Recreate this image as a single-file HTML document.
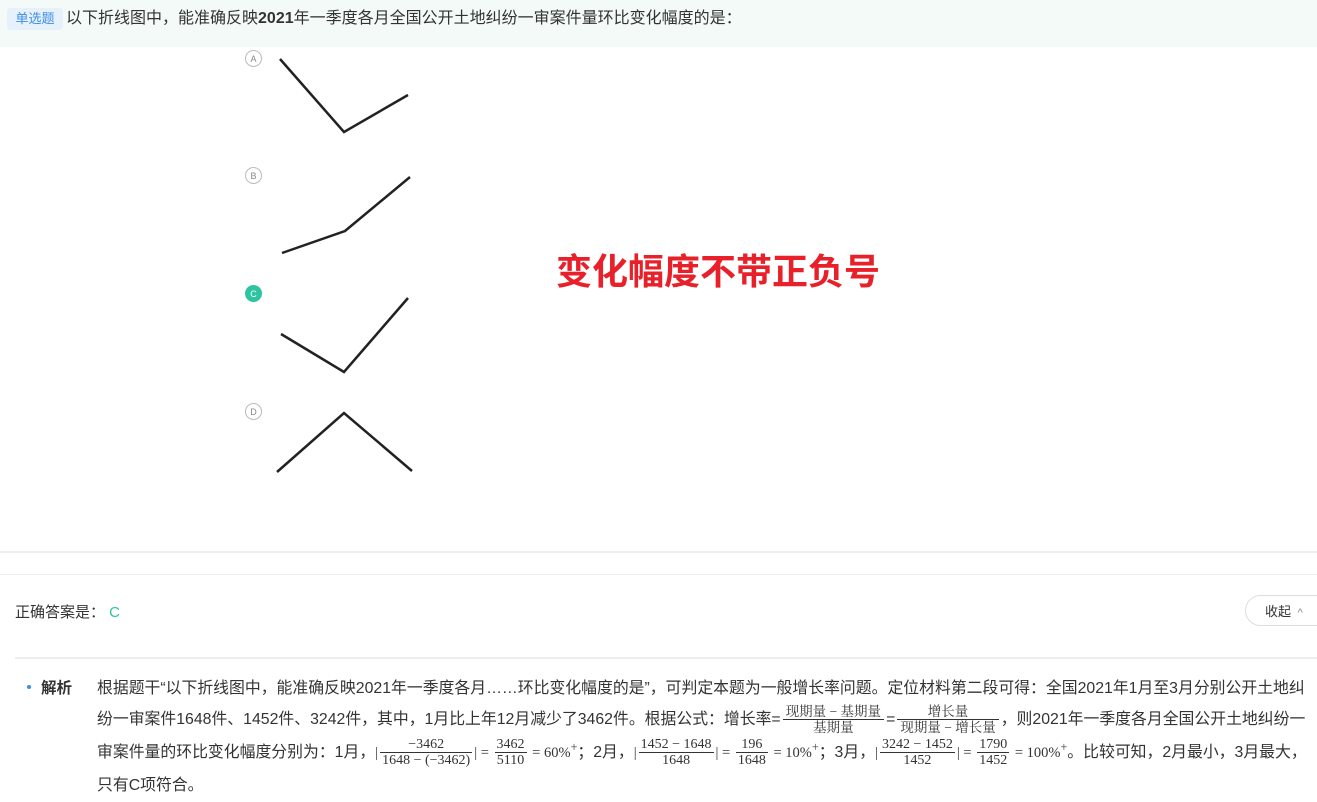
<!DOCTYPE html>
<html><head><meta charset="utf-8"><style>
body{margin:0;width:1317px;height:801px;overflow:hidden;background:#fff;font-family:"Liberation Sans","Noto Sans CJK SC",sans-serif;color:#333;position:relative}
.hdr{position:absolute;left:0;top:0;width:1317px;height:47px;background:#f3faf8}
.badge{position:absolute;left:7px;top:8px;width:56px;height:22px;background:#e6f1fc;border-radius:4px;color:#3d8ee8;font-size:13px;line-height:22px;text-align:center}
.q{position:absolute;left:66px;top:9px;font-size:16px;line-height:20px;color:#333;white-space:nowrap}
.opt{position:absolute;left:245px;width:17px;height:17px;border:1px solid #bbb;border-radius:50%;font-size:9px;line-height:17px;text-align:center;color:#888;box-sizing:border-box}
.red{position:absolute;left:556px;top:243px;font-size:36px;font-weight:bold;color:#e8202a}
.hl{position:absolute;left:0;width:1317px;height:2px;background:#eee}
.ans{position:absolute;left:15px;top:601px;font-size:15px}
.btn{position:absolute;left:1245px;top:595px;width:90px;height:31px;border:1px solid #ddd;border-radius:16px;font-size:13px;line-height:31px;box-sizing:border-box;padding-left:19px;color:#333}
.dot{position:absolute;left:27px;top:685px;width:4px;height:4px;border-radius:50%;background:#3d8ee8}
.jx{position:absolute;left:41px;top:676px;font-size:15.5px;font-weight:bold;color:#333}
.txt{position:absolute;left:97px;top:673px;width:1300px;font-size:15.85px;line-height:32px;color:#333;white-space:nowrap}
.l{position:absolute;left:0}
.fr{display:inline-block;vertical-align:middle;text-align:center;font-family:"Liberation Serif","Noto Serif CJK SC",serif;font-size:14px;line-height:13px;margin:0 2px}
.fr span{display:block;padding:1px 2px}
.fr span:first-child{border-bottom:1px solid #333}
.m{font-family:"Liberation Serif",serif;font-size:14.5px}
</style></head><body>
<div class="hdr"></div>
<div class="badge">单选题</div>
<div class="q">以下折线图中，能准确反映<b>2021</b>年一季度各月全国公开土地纠纷一审案件量环比变化幅度的是：</div>
<div class="opt" style="top:50px">A</div>
<div class="opt" style="top:167px">B</div>
<div class="opt" style="top:285px;background:#2ec4a0;border-color:#2ec4a0;color:#fff">C</div>
<div class="opt" style="top:403px">D</div>
<svg style="position:absolute;left:0;top:0" width="1317" height="540"><g fill="none" stroke="#222" stroke-width="2.5">
<polyline points="280,59 344,132 408,95"/>
<polyline points="282,253 345,231 410,177"/>
<polyline points="281,334 344,372 408,298"/>
<polyline points="277,472 344,413 412,471"/></g></svg>
<div class="red">变化幅度不带正负号</div>
<div class="hl" style="top:551px"></div>
<div class="hl" style="top:574px;height:1px"></div>
<div class="ans">正确答案是：&nbsp;<span style="color:#2ec4a0">C</span></div>
<div class="btn">收起 <span style="color:#888;font-size:11px">&nbsp;^</span></div>
<div class="hl" style="top:657px;left:15px"></div>
<div class="dot"></div>
<div class="jx">解析</div>
<div class="txt"><span class="l" style="top:0">根据题干“以下折线图中，能准确反映2021年一季度各月……环比变化幅度的是”，可判定本题为一般增长率问题。定位材料第二段可得：全国2021年1月至3月分别公开土地纠</span><span class="l" style="top:31px">纷一审案件1648件、1452件、3242件，其中，1月比上年12月减少了3462件。根据公式：增长率=<span class="fr" style="font-size:13.5px"><span style="padding:1px 3px">现期量 − 基期量</span><span>基期量</span></span>=<span class="fr" style="font-size:13.5px"><span>增长量</span><span style="padding:1px 3px">现期量 − 增长量</span></span>，则2021年一季度各月全国公开土地纠纷一</span><span class="l" style="top:58px">审案件量的环比变化幅度分别为：1月，<span class="m">|</span><span class="fr"><span>−3462</span><span>1648 − (−3462)</span></span><span class="m">| = </span><span class="fr"><span>3462</span><span>5110</span></span><span class="m"> = 60%<sup>+</sup></span>；2月，<span class="m">|</span><span class="fr"><span>1452 − 1648</span><span>1648</span></span><span class="m">| = </span><span class="fr"><span>196</span><span>1648</span></span><span class="m"> = 10%<sup>+</sup></span>；3月，<span class="m">|</span><span class="fr"><span>3242 − 1452</span><span>1452</span></span><span class="m">| = </span><span class="fr"><span>1790</span><span>1452</span></span><span class="m"> = 100%<sup>+</sup></span>。比较可知，2月最小，3月最大，</span><span class="l" style="top:97px">只有C项符合。</span></div>
</body></html>
